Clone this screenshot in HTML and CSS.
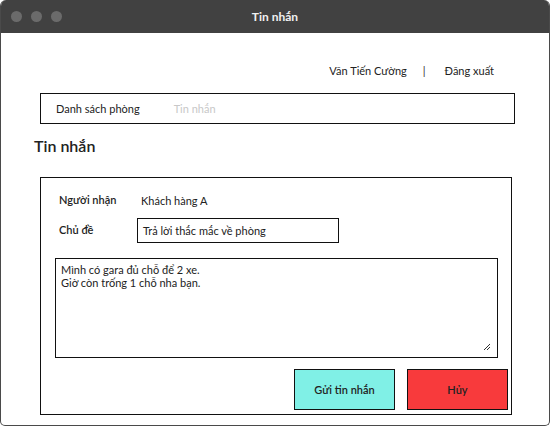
FILE: index.html
```html
<!DOCTYPE html>
<html>
<head>
<meta charset="utf-8">
<link rel="stylesheet" href="styles.css">
</head>
<body>
<div class="window">
  <div class="titlebar">
    <div class="dots"><span class="dot"></span><span class="dot"></span><span class="dot"></span></div>
    <div class="title">Tin nhắn</div>
  </div>
  <div class="content">
    <div class="userbar">
      <span class="user">Văn Tiến Cường</span>
      <span class="sep">|</span>
      <span class="logout">Đăng xuất</span>
    </div>
    <div class="nav">
      <span class="nav-item">Danh sách phòng</span>
      <span class="nav-item active">Tin nhắn</span>
    </div>
    <h1 class="heading">Tin nhắn</h1>
    <div class="form">
      <div class="row row-recipient">
        <span class="label">Người nhận</span>
        <span class="value">Khách hàng A</span>
      </div>
      <div class="row row-subject">
        <span class="label">Chủ đề</span>
        <div class="input">Trả lời thắc mắc về phòng</div>
      </div>
      <div class="textarea">
        <div>Mình có gara đủ chỗ để 2 xe.</div>
        <div>Giờ còn trống 1 chỗ nha bạn.</div>
        <svg class="grip" width="9" height="9" viewBox="0 0 9 9"><path d="M8 2 L2 8 M8 5 L5 8" stroke="#333" stroke-width="1"/></svg>
      </div>
      <div class="actions">
        <button class="btn send">Gửi tin nhắn</button>
        <button class="btn cancel">Hủy</button>
      </div>
    </div>
  </div>
</div>
</body>
</html>
```

FILE: styles.css
```css
* { box-sizing: border-box; }
html, body { margin: 0; padding: 0; background: #fff; }
body { font-family: Lato, "Noto Sans", sans-serif; color: #222; }
.window {
  width: 550px;
  height: 426px;
  border: 1px solid #4a4a4a;
  border-top: none;
  border-radius: 6px 6px 5px 5px;
  overflow: hidden;
  display: flex;
  flex-direction: column;
}
.titlebar {
  height: 33px;
  background: #414141;
  display: flex;
  align-items: center;
  position: relative;
  flex-shrink: 0;
}
.dots { display: flex; gap: 9px; padding-left: 10px; }
.dot { width: 11px; height: 11px; border-radius: 50%; background: #6b6b6b; display: block; }
.title {
  position: absolute;
  left: 0; right: 0; top: 0; bottom: 0;
  display: flex; align-items: center; justify-content: center;
  color: #f0f0f0; font-weight: bold; font-size: 12px;
}
.content { flex: 1; padding: 0 0 0 39px; }
.userbar {
  display: flex;
  justify-content: flex-end;
  padding: 31px 55px 0 0;
  font-size: 11px;
  height: 60px;
  align-items: flex-start;
}
.user { margin-right: 16px; }
.sep { margin-right: 19px; color: #333; }
.nav {
  width: 475px;
  height: 31px;
  border: 1px solid #111;
  display: flex;
  align-items: center;
  padding-left: 15px;
  font-size: 11px;
}
.nav-item { margin-right: 34px; }
.nav-item.active { color: #c8c8c8; }
.heading {
  margin: 11px 0 0 -6px;
  font-size: 16px;
  font-weight: 600;
  height: 22px;
  line-height: 22px;
}
.form {
  margin-top: 20px;
  width: 472px;
  height: 238px;
  border: 1px solid #111;
  padding: 13px 0 0 14px;
  font-size: 11px;
}
.row { display: flex; align-items: center; }
.label { width: 82px; padding-left: 4px; font-weight: 600; }
.row-recipient { height: 16px; }
.row-recipient .label { width: 86px; }
.row-recipient .value { padding-top: 3px; }
.row-subject { margin-top: 11px; }
.row-subject .label { margin-top: -2px; }
.input {
  width: 202px;
  height: 25px;
  border: 1px solid #111;
  display: flex;
  align-items: center;
  padding-left: 5px;
}
.textarea {
  margin-top: 15px;
  width: 443px;
  height: 100px;
  border: 1px solid #111;
  padding: 4px 5px;
  line-height: 13px;
  position: relative;
}
.grip { position: absolute; right: 6px; bottom: 6px; }
.actions {
  display: flex;
  justify-content: flex-end;
  gap: 12px;
  margin-top: 11px;
  padding-right: 3px;
}
.btn {
  width: 101px;
  height: 41px;
  border: 1px solid #111;
  font-family: Lato, "Noto Sans", sans-serif;
  font-size: 11px;
  font-weight: 600;
  color: #222;
  padding: 0;
}
.send { background: #80f0e6; }
.cancel { background: #f83a3c; }
```
